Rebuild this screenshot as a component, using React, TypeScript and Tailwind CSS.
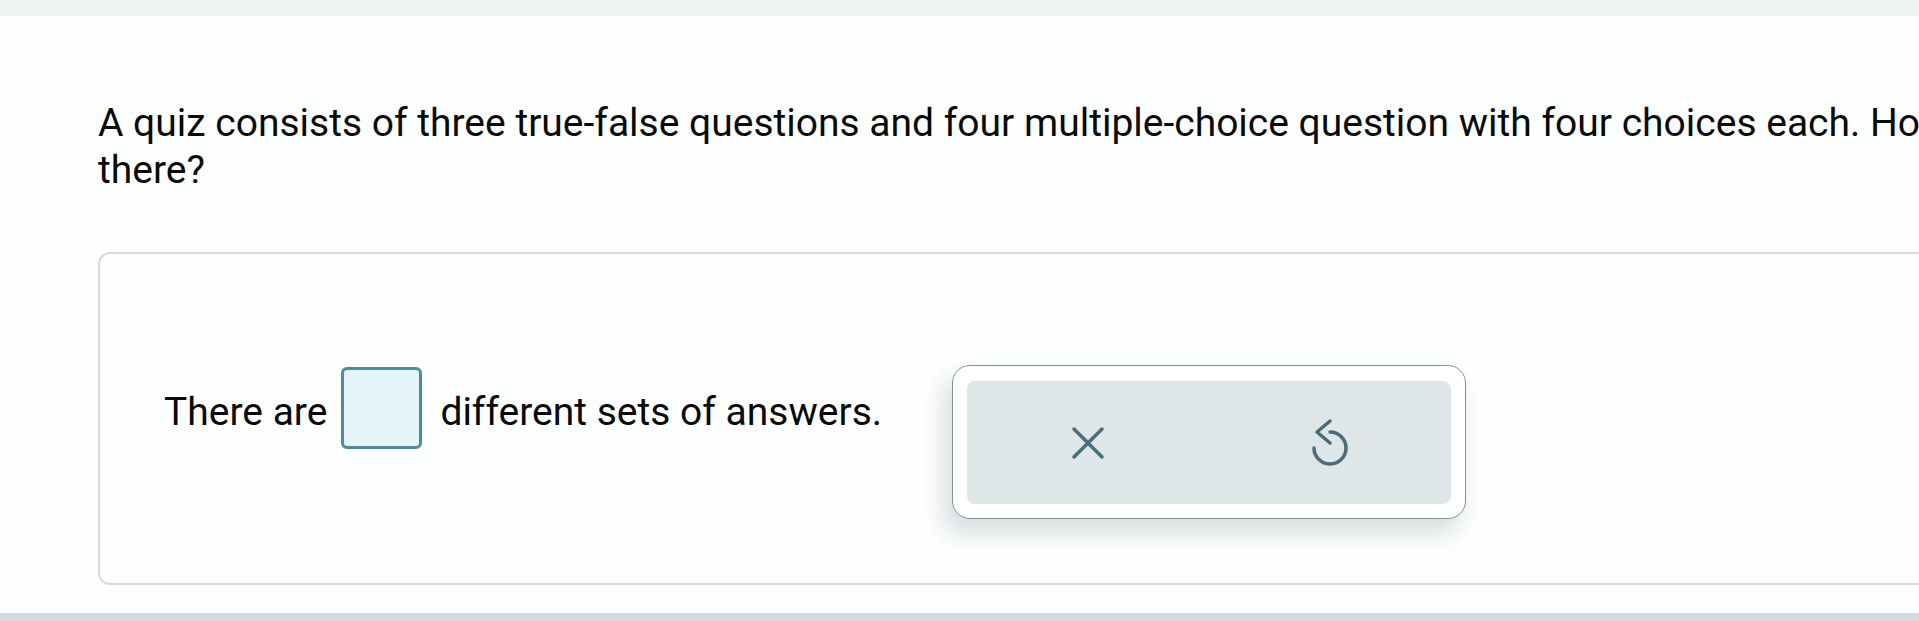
import { FC } from "react";

const CloseIcon: FC = () => (
  <svg width="34" height="34" viewBox="0 0 34 34" fill="none">
    <path d="M3 3L31 31M31 3L3 31" stroke="#4a6d79" strokeWidth="3.5" strokeLinecap="round" />
  </svg>
);

const UndoIcon: FC = () => (
  <svg width="40" height="50" viewBox="0 0 40 50" fill="none">
    <path
      d="M20 14A16 16 0 1 1 4 30M20 3L7 14L20 25"
      stroke="#4a6d79"
      strokeWidth="3.5"
      strokeLinecap="round"
      strokeLinejoin="round"
    />
  </svg>
);

const App: FC = () => {
  return (
    <div className="h-[621px] w-full overflow-hidden bg-white flex flex-col font-['Roboto',sans-serif] text-[#0a0a0a]">
      {/* top strip */}
      <div className="h-4 shrink-0 bg-[#eef2f3]" />

      <main className="flex-1 pl-[98px] pt-[84px] bg-[#fdfefe]">
        {/* Question */}
        <p className="whitespace-nowrap text-[39px] leading-[47px]">
          A quiz consists of three true-false questions and four multiple-choice question with four
          choices each. How many different sets of answers are
          <br />
          there?
        </p>

        {/* Answer card */}
        <div className="mt-[58px] w-[1900px] h-[333px] rounded-xl border-2 border-[#d6dadb] bg-[#fdfefe] pl-[64px] pt-[113px]">
          <div className="flex items-start">
            <span className="mt-[22px] text-[39px] leading-[47px]">There are</span>
            <input
              type="text"
              aria-label="answer"
              className="ml-[14px] w-[81px] h-[82px] rounded-md border-[3px] border-[#4b8d9b] bg-[#e5f4f8] outline-none"
            />
            <span className="ml-[18px] mt-[22px] text-[39px] leading-[47px]">
              different sets of answers.
            </span>

            {/* Answer tools */}
            <div className="ml-[70px] -mt-[2px] w-[514px] h-[154px] rounded-[18px] border-[1.5px] border-[#7f9397] bg-white px-[14px] pt-[15px] pb-[14px] shadow-[-8px_14px_24px_rgba(40,60,70,0.18)]">
              <div className="flex h-full rounded-lg bg-[#dfe6e8]">
                <button className="flex flex-1 items-center justify-center">
                  <CloseIcon />
                </button>
                <button className="flex flex-1 items-center justify-center">
                  <UndoIcon />
                </button>
              </div>
            </div>
          </div>
        </div>
      </main>

      {/* bottom strip */}
      <div className="h-2 shrink-0 bg-[#d5dadd]" />
    </div>
  );
};

export default App;
